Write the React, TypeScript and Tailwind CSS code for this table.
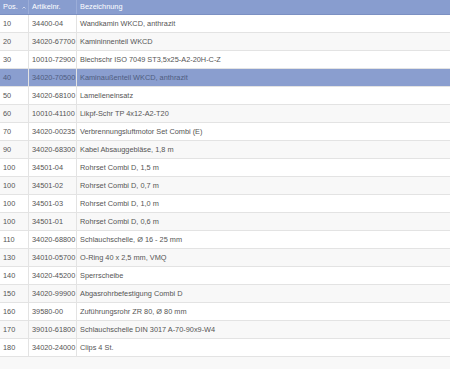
import React from 'react';

type Part = { pos: string; nr: string; name: string };

const parts: Part[] = [
  { pos: '10', nr: '34400-04', name: 'Wandkamin WKCD, anthrazit' },
  { pos: '20', nr: '34020-67700', name: 'Kamininnenteil WKCD' },
  { pos: '30', nr: '10010-72900', name: 'Blechschr ISO 7049 ST3,5x25-A2-20H-C-Z' },
  { pos: '40', nr: '34020-70500', name: 'Kaminaußenteil WKCD, anthrazit' },
  { pos: '50', nr: '34020-68100', name: 'Lamelleneinsatz' },
  { pos: '60', nr: '10010-41100', name: 'Likpf-Schr TP 4x12-A2-T20' },
  { pos: '70', nr: '34020-00235', name: 'Verbrennungsluftmotor Set Combi (E)' },
  { pos: '90', nr: '34020-68300', name: 'Kabel Absauggebläse, 1,8 m' },
  { pos: '100', nr: '34501-04', name: 'Rohrset Combi D, 1,5 m' },
  { pos: '100', nr: '34501-02', name: 'Rohrset Combi D, 0,7 m' },
  { pos: '100', nr: '34501-03', name: 'Rohrset Combi D, 1,0 m' },
  { pos: '100', nr: '34501-01', name: 'Rohrset Combi D, 0,6 m' },
  { pos: '110', nr: '34020-68800', name: 'Schlauchschelle, Ø 16 - 25 mm' },
  { pos: '130', nr: '34010-05700', name: 'O-Ring 40 x 2,5 mm, VMQ' },
  { pos: '140', nr: '34020-45200', name: 'Sperrscheibe' },
  { pos: '150', nr: '34020-99900', name: 'Abgasrohrbefestigung Combi D' },
  { pos: '160', nr: '39580-00', name: 'Zuführungsrohr ZR 80, Ø 80 mm' },
  { pos: '170', nr: '39010-61800', name: 'Schlauchschelle DIN 3017 A-70-90x9-W4' },
  { pos: '180', nr: '34020-24000', name: 'Clips 4 St.' },
];

const SELECTED = 3;

function PartRow({ part, index }: { part: Part; index: number }) {
  const selected = index === SELECTED;
  const bg = selected ? 'bg-[#8a9ecf] text-[#4f5d80]' : index % 2 ? 'bg-[#f8f8f8] text-[#555]' : 'bg-white text-[#555]';
  return (
    <div className={`flex h-[18px] items-center border-b border-[#e3e3e3] ${bg}`}>
      <div className="flex h-full w-[29px] items-center border-r border-[#e3e3e3] pl-[3px]">{part.pos}</div>
      <div className="flex h-full w-[48px] items-center border-r border-[#e3e3e3] pl-[3px]">{part.nr}</div>
      <div className="flex h-full flex-1 items-center whitespace-nowrap pl-[3px]">{part.name}</div>
    </div>
  );
}

export default function App() {
  return (
    <div className="flex h-[369px] w-[450px] flex-col overflow-hidden bg-[#f8f8f8] font-['Liberation_Sans',Arial,sans-serif] text-[7.35px]">
      <div className="flex h-[15px] items-center border-b border-[#7b90c2] bg-[#889dcf] text-white">
        <div className="flex h-full w-[29px] items-center border-r border-[#9badd8] pl-[3px]">
          Pos.
          <svg className="ml-[4px]" width="4" height="3" viewBox="0 0 4 3">
            <path d="M0.5 2.5 L2 1 L3.5 2.5" fill="none" stroke="#dfe5f4" strokeWidth="0.8" />
          </svg>
        </div>
        <div className="flex h-full w-[48px] items-center border-r border-[#9badd8] pl-[3px]">Artikelnr.</div>
        <div className="flex h-full flex-1 items-center pl-[3px]">Bezeichnung</div>
      </div>
      {parts.map((p, i) => (
        <PartRow key={i} part={p} index={i} />
      ))}
    </div>
  );
}
